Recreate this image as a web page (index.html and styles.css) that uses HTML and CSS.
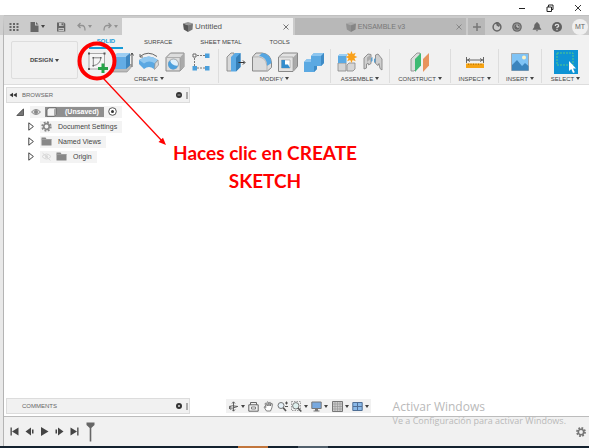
FILE: index.html
```html
<!DOCTYPE html>
<html lang="es">
<head>
<meta charset="utf-8">
<title>Untitled</title>
<link rel="stylesheet" href="styles.css">
</head>
<body>
<header class="titlebar">
  <button class="win-btn" aria-label="Minimize"><svg width="8" height="8" viewBox="0 0 8 8"><path d="M1 4.500h6" stroke="#222"/></svg></button>
  <button class="win-btn" aria-label="Restore"><svg width="8" height="8" viewBox="0 0 8 8"><path d="M1 3h4.500v4.500H1zM2.500 3V1H7v4.500H5.500" fill="none" stroke="#222"/></svg></button>
  <button class="win-btn" aria-label="Close"><svg width="8" height="8" viewBox="0 0 8 8"><path d="M1 1l6 6M7 1l-6 6" stroke="#222" stroke-width=".9"/></svg></button>
</header>

<div class="frame">
<div class="gutter"></div>
<div class="app">
  <nav class="tabbar">
    <div class="quick">
      <button class="q" aria-label="Data panel"><svg width="10" height="10" viewBox="0 0 10 10" fill="#666"><path d="M.5 1h2v2h-2zM4 1h2v2H4zM7.500 1h2v2h-2zM.5 4h2v2h-2zM4 4h2v2H4zM7.500 4h2v2h-2zM.5 7h2v2h-2zM4 7h2v2H4zM7.500 7h2v2h-2z"/></svg></button>
      <button class="q wide" aria-label="File"><svg width="9" height="10" viewBox="0 0 9 10"><path d="M.5 0H5v3.500h3.500V10h-8zM6 0l2.500 2.500H6z" fill="#666"/></svg><i class="caret"></i></button>
      <button class="q" aria-label="Save"><svg width="10" height="10" viewBox="0 0 10 10"><path d="M1 .5h7l1.300 1.300v7.700H1z" fill="#666"/><path d="M3 1h4.500v3H3zM2.500 6h5.500v3H2.500z" fill="#c4c4c4"/><path d="M5.500 1.200H7v2H5.500zM3.200 7h4v.8h-4z" fill="#666"/></svg></button>
      <button class="q wide dim" aria-label="Undo"><svg width="9" height="9" viewBox="0 0 9 9"><path d="M3.500 1L1 3.500 3.500 6M1 3.500h4Q8 3.500 8 8.500" fill="none" stroke="#929292" stroke-width="1.300"/></svg><i class="caret"></i></button>
      <button class="q wide dim" aria-label="Redo"><svg width="9" height="9" viewBox="0 0 9 9"><path d="M5.500 1L8 3.500 5.500 6M8 3.500H4Q1 3.500 1 8.500" fill="none" stroke="#929292" stroke-width="1.300"/></svg><i class="caret"></i></button>
    </div>
    <div class="doc active">
      <button class="doc-name"><svg width="10" height="10" viewBox="0 0 10 10"><path d="M0 1.500L5 0l5 1.500-4.500 1.700z" fill="#999"/><path d="M0 1.500l5 1.700V10L.8 7.500z" fill="#555"/><path d="M5 3.200l5-1.700-.5 6L5 10z" fill="#777"/></svg>Untitled</button>
      <button class="x" aria-label="Close tab"><svg width="6" height="6" viewBox="0 0 6 6"><path d="M.5.5l5 5M5.500.5l-5 5" stroke="#777"/></svg></button>
    </div>
    <div class="doc">
      <button class="doc-name"><svg width="10" height="10" viewBox="0 0 10 10"><path d="M0 1.500L5 0l5 1.500-4.500 1.700z" fill="#aaa"/><path d="M0 1.500l5 1.700V10L.8 7.500z" fill="#929292"/><path d="M5 3.200l5-1.700-.5 6L5 10z" fill="#858585"/></svg>ENSAMBLE v3</button>
      <button class="x" aria-label="Close tab"><svg width="6" height="6" viewBox="0 0 6 6"><path d="M.5.5l5 5M5.500.5l-5 5" stroke="#888"/></svg></button>
    </div>
    <button class="new" aria-label="New tab"><svg width="8" height="8" viewBox="0 0 8 8"><path d="M0 4h8M4 0v8" stroke="#777" stroke-width="1.500"/></svg></button>
    <div class="status">
      <button aria-label="Extensions"><svg width="10" height="10" viewBox="0 0 10 10"><circle cx="5" cy="5" r="3.900" fill="none" stroke="#666" stroke-width="1.500"/><path d="M4 0h2.500v2.500l2-.5L7 5 4.500 3.500z" fill="#666"/></svg></button>
      <button aria-label="Job status"><svg width="10" height="10" viewBox="0 0 10 10"><circle cx="5" cy="5" r="4.800" fill="#666"/><circle cx="5" cy="5" r="3.200" fill="none" stroke="#aaa" stroke-width=".7"/><path d="M5 2.500V5h2.300" fill="none" stroke="#ddd"/></svg></button>
      <button aria-label="Notifications"><svg width="10" height="10" viewBox="0 0 10 10"><path d="M4.400 0h1.200v1C7.500 1.500 7.800 3 7.800 5L9.500 7.800h-9L2.200 5c0-2 .3-3.500 2.200-4zM3.800 8.300h2.400Q5 10.500 3.800 8.300z" fill="#666"/></svg></button>
      <button aria-label="Help"><svg width="10" height="10" viewBox="0 0 10 10"><circle cx="5" cy="5" r="5" fill="#606060"/><path d="M3.300 4Q3.300 2.300 5 2.300T6.700 4Q6.500 4.800 5 5.400v.9M5 7v1.200" fill="none" stroke="#ddd" stroke-width="1.200"/></svg></button>
      <button class="avatar">MT</button>
    </div>
  </nav>

  <section class="toolbar">
    <button class="workspace">DESIGN <i class="caret"></i></button>
    <div class="ribbon">
      <div class="modes">
        <button class="mode on">SOLID</button>
        <button class="mode">SURFACE</button>
        <button class="mode">SHEET METAL</button>
        <button class="mode">TOOLS</button>
      </div>
      <div class="groups">
        <div class="group">
          <div class="icons">
            <button class="tool sketch" aria-label="Create Sketch">
              <svg width="22" height="22" viewBox="0 0 22 22"><path d="M3 2.500h15.500V18H3z" fill="#f6f6f6" stroke="#888" stroke-width=".7"/><path d="M2 1.500h2v2H2zM17.500 1.500h2v2h-2zM2 17h2v2H2zM6.500 6h1.500v1.500H6.500zM14 6h1.500v1.500H14zM6.500 14H8v1.500H6.500z" fill="#555"/><path d="M7.300 14.700V6.800h7.500Q14.300 13.500 7.300 14.700" fill="none" stroke="#666" stroke-width=".8"/><path d="M15.500 12.500h3V16H22v3h-3.500v3h-3v-3H12v-3h3.500z" fill="#27a348"/></svg>
              <svg class="callout" width="100" height="110" viewBox="0 0 100 110"><circle cx="20" cy="22" r="17.500" fill="none" stroke="#f00" stroke-width="4"/><path d="M26 39L86 103" stroke="#f00" stroke-width="1.200"/><path d="M89 106l-7.500-3 4.500-4.300z" fill="#f00"/></svg>
            </button>
            <button class="tool" aria-label="Extrude"><svg width="22" height="22" viewBox="0 0 22 22"><path d="M1 17h14l4-4v3.500L15 21H1z" fill="#bbb" stroke="#888" stroke-width=".6"/><path d="M1 5.500h13V18H1z" fill="#63ace5"/><path d="M1 5.500L5 2h13l-4 3.500z" fill="#9bcdf2"/><path d="M14 5.500L18 2v12.500L14 18z" fill="#3d86c0"/><path d="M20 16V2M18.500 4.500L20 2l1.500 2.500" fill="none" stroke="#444" stroke-width=".9"/></svg></button>
            <button class="tool" aria-label="Revolve"><svg width="22" height="22" viewBox="0 0 22 22"><path d="M1 9q10-7 19 0l-4 9q-5-4-10 0L1 13z" fill="#5ba8e2"/><path d="M1 9q10-7 19 0l-3 3.500Q11 8.500 6 12.500z" fill="#91c8f0"/><path d="M17 12.500L20 9l.5 5-4 4.500z" fill="#ddd" stroke="#888" stroke-width=".7"/><path d="M2 5.500Q10-1 19 5.500M2 3v3h3" fill="none" stroke="#555" stroke-width=".9"/></svg></button>
            <button class="tool" aria-label="Hole"><svg width="22" height="22" viewBox="0 0 22 22"><path d="M2 6.500L6.500 2H20v13.500L16 20H2z" fill="#ddd" stroke="#888"/><path d="M16 6.500L20 2v13.500L16 20z" fill="#aaa"/><path d="M2.500 6.500H16V20" fill="none" stroke="#999" stroke-width=".7"/><circle cx="9.500" cy="13" r="5" fill="#dff0fb" stroke="#888" stroke-width=".7"/><path d="M6 9.500a5 5 0 1 0 8 5q-6 1-8-5z" fill="#4da0dc"/></svg></button>
            <button class="tool" aria-label="Pattern"><svg width="22" height="22" viewBox="0 0 22 22"><path d="M7 4.500h8M4.500 7v8M7 17h8" stroke="#777" stroke-dasharray="2 1"/><path d="M3 3h3v3H3z" fill="#fff" stroke="#666"/><path d="M15 2.500h4.500V7H15zM2.500 15H7v4.500H2.500zM15 15h4.500v4.500H15z" fill="#4a9fdc"/></svg></button>
          </div>
          <button class="menu">CREATE <i class="caret"></i></button>
        </div>
        <div class="group">
          <div class="icons">
            <button class="tool" aria-label="Press Pull"><svg width="22" height="22" viewBox="0 0 22 22"><path d="M2 6l4-4h3v14l-3 4H2z" fill="#d9d9d9" stroke="#888" stroke-width=".9"/><path d="M6 6l4-4h5.500v14L11 20.500H6z" fill="#5aa9e4"/><path d="M11 6.500L15.500 2v14L11 20.500z" fill="#357fb8"/><path d="M13.500 11.500h6M18 9.500l2 2-2 2" fill="none" stroke="#333"/></svg></button>
            <button class="tool" aria-label="Fillet"><svg width="22" height="22" viewBox="0 0 22 22"><path d="M1.500 20V6l3.500-4h6q9 1 9.500 10v4.500L16.500 20z" fill="#ddd" stroke="#888"/><path d="M8 5l3-3q9 1 9.500 10L16 15Q16 6 8 5z" fill="#55a6e2"/><path d="M2 6q13-2 14 9v5" fill="none" stroke="#aaa" stroke-width=".8"/></svg></button>
            <button class="tool" aria-label="Shell"><svg width="22" height="22" viewBox="0 0 22 22"><path d="M1.500 6L6 2h14.500v13.500L16 20.500H1.500z" fill="#e3e3e3" stroke="#888"/><path d="M16 6.500L20 2.500v13l-4 4.500z" fill="#aaa"/><path d="M4.500 9H13v8H4.500z" fill="#fff" stroke="#999" stroke-width=".6"/><path d="M4.500 9v8H13l-2-3.500H8V9z" fill="#348dcd"/><path d="M2 6h14v14" fill="none" stroke="#999" stroke-width=".7"/></svg></button>
            <button class="tool" aria-label="Combine"><svg width="22" height="22" viewBox="0 0 22 22"><path d="M1 11l3-3h4V5l3-3h10v10l-3 3h-4v3l-3 3H1z" fill="#5ba9e2"/><path d="M8 5l3-3h10l-3 3zM1 11l3-3h4v3z" fill="#8cc5ef"/><path d="M18 5l3-3v10l-3 3zM11 15h3v3l-3 3z" fill="#3e8bc6"/></svg></button>
          </div>
          <button class="menu">MODIFY <i class="caret"></i></button>
        </div>
        <div class="group">
          <div class="icons">
            <button class="tool" aria-label="New Component"><svg width="22" height="22" viewBox="0 0 22 22"><path d="M2 12h8v8H2zM11 14l2-2h6v6l-2 2h-6z" fill="#d5d5d5" stroke="#888" stroke-width=".8"/><path d="M2 12h8.500V4.500L12 3H4L2 5z" fill="#5ba9e2"/><path d="M2 5l2-2h8l-2 2z" fill="#9dd0f4"/><path d="M15.500 0l1.200 3 3-1.300-1.300 3 3 1.300-3 1.200 1.300 3-3-1.300-1.200 3-1.300-3-3 1.300 1.300-3-3-1.200 3-1.300-1.300-3 3 1.300z" fill="#f9a11b"/></svg></button>
            <button class="tool" aria-label="Joint"><svg width="22" height="22" viewBox="0 0 22 22"><path d="M2 18V7l4-4 3 .5v9L6.500 14l-.5-2-1.500 1v4zM20 19V8l-4-5-2.500 1v8.500l2.500 2 1-2 1 5z" fill="#cfcfcf" stroke="#888" stroke-width=".9"/><path d="M5 6.500L9 3.500v4L5 11z" fill="#aaa"/><path d="M9 7l1.500-1v4L9 11zM13.500 7L12 8v4l1.500-1z" fill="#5b9fcf"/></svg></button>
          </div>
          <button class="menu">ASSEMBLE <i class="caret"></i></button>
        </div>
        <div class="group">
          <div class="icons">
            <button class="tool" aria-label="Offset Plane"><svg width="22" height="22" viewBox="0 0 22 22"><path d="M2 8l6-6h3v12l-6 6H2z" fill="#ddd" stroke="#888" stroke-width=".8"/><path d="M6 8l6-6v12.500L6 21z" fill="#3fba73"/><path d="M14 8l6-6v12.500L14 21z" fill="#e8935d"/></svg></button>
          </div>
          <button class="menu">CONSTRUCT <i class="caret"></i></button>
        </div>
        <div class="group">
          <div class="icons">
            <button class="tool" aria-label="Measure"><svg width="22" height="22" viewBox="0 0 22 22"><path d="M2.500 6v6M19.500 6v6M3 9h16M6 7.500L3.500 9 6 10.500M16 7.500L18.500 9 16 10.500" fill="none" stroke="#555" stroke-width=".9"/><path d="M2 12.500h18V17H2z" fill="#f7a414"/><path d="M4.500 12.500V14m2.500-1.500V14m2.500-1.500V14m2.500-1.500V14m2.500-1.500V14m2.500-1.500V14" stroke="#a86b00" stroke-width=".7"/></svg></button>
          </div>
          <button class="menu">INSPECT <i class="caret"></i></button>
        </div>
        <div class="group">
          <div class="icons">
            <button class="tool" aria-label="Insert Image"><svg width="22" height="22" viewBox="0 0 22 22"><path d="M2.500 2.500h17v17h-17z" fill="#7fc3f5" stroke="#999" stroke-width=".8"/><circle cx="15" cy="6.500" r="2" fill="#fff3c4"/><path d="M3 14l5-5 5 6 3-3 3.500 3v4.500H3z" fill="#3a84bd"/></svg></button>
          </div>
          <button class="menu">INSERT <i class="caret"></i></button>
        </div>
        <div class="group">
          <div class="icons">
            <button class="tool" aria-label="Select"><svg width="24" height="24" viewBox="0 0 24 24"><path d="M0 0h24v24H0z" fill="#0e93d4"/><path d="M3 3h16v12H3z" fill="none" stroke="#5fd07f" stroke-width=".9" stroke-dasharray="2 1"/><path d="M15 11v10l2.300-2 1.700 4 1.800-.8-1.800-3.800h3z" fill="#fff"/></svg></button>
          </div>
          <button class="menu">SELECT <i class="caret"></i></button>
        </div>
      </div>
    </div>
  </section>

  <main class="canvas">
    <aside class="browser">
      <div class="panel-head"><svg class="lead" width="8" height="6" viewBox="0 0 8 6"><path d="M4 .8v4.400L.5 3zM7.800.8v4.400L4.200 3z" fill="#333"/></svg><span>BROWSER</span><button class="dot" aria-label="Minimize panel"><svg width="6" height="6" viewBox="0 0 6 6"><circle cx="3" cy="3" r="3" fill="#333"/><path d="M1.500 3h3" stroke="#aaa"/></svg></button><i class="grip"></i></div>
      <ul class="tree">
        <li class="row root">
          <svg width="8" height="8" viewBox="0 0 8 8"><path d="M7.500.8v6.700H.8z" fill="#777" stroke="#333" stroke-width=".7"/></svg>
          <div class="chip">
            <svg width="10" height="8" viewBox="0 0 10 8"><path d="M.5 4Q5-1 9.500 4 5 9 .5 4z" fill="#ddd" stroke="#888"/><circle cx="5" cy="4" r="2" fill="#888"/></svg>
            <span class="selected"><svg width="11" height="10" viewBox="0 0 11 10"><path d="M1 2.500L3 .8h7v6.700L8 9.300H1z" fill="#f4f4f4" stroke="#555" stroke-width=".8"/><path d="M8 2.500l2-1.500v6.500L8 9z" fill="#aaa"/></svg>(Unsaved)</span>
            <svg width="9" height="9" viewBox="0 0 9 9"><circle cx="4.500" cy="4.500" r="3.800" fill="#fff" stroke="#444" stroke-width=".9"/><circle cx="4.500" cy="4.500" r="1.500" fill="#333"/></svg>
          </div>
        </li>
        <li class="row">
          <svg width="6" height="9" viewBox="0 0 6 9"><path d="M.8.8v7.400L5.400 4.500z" fill="#fff" stroke="#444"/></svg>
          <div class="chip"><svg width="11" height="11" viewBox="0 0 11 11"><circle cx="5.500" cy="5.500" r="4.300" fill="none" stroke="#888" stroke-width="1.800" stroke-dasharray="1.900 1.480"/><circle cx="5.500" cy="5.500" r="2.800" fill="none" stroke="#888" stroke-width="1.800"/></svg><span>Document Settings</span></div>
        </li>
        <li class="row">
          <svg width="6" height="9" viewBox="0 0 6 9"><path d="M.8.8v7.400L5.400 4.500z" fill="#fff" stroke="#444"/></svg>
          <div class="chip"><svg width="11" height="9" viewBox="0 0 11 9"><path d="M.5.5h4l1 1.500h5v6.500H.5z" fill="#888"/><path d="M.5 2.500h10" stroke="#aaa" stroke-width=".6"/></svg><span>Named Views</span></div>
        </li>
        <li class="row">
          <svg width="6" height="9" viewBox="0 0 6 9"><path d="M.8.8v7.400L5.400 4.500z" fill="#fff" stroke="#444"/></svg>
          <div class="chip"><svg width="11" height="9" viewBox="0 0 11 9"><path d="M1 4.500q4.500-5 9 0-4.500 5-9 0zM1.500 1l8 7.500" fill="none" stroke="#d8d8d8"/><circle cx="5.500" cy="4.500" r="1.500" fill="#d8d8d8"/></svg><svg width="11" height="9" viewBox="0 0 11 9"><path d="M.5.5h4l1 1.500h5v6.500H.5z" fill="#888"/><path d="M.5 2.500h10" stroke="#aaa" stroke-width=".6"/></svg><span>Origin</span></div>
        </li>
      </ul>
    </aside>

    <p class="note">Haces clic en CREATE<br>SKETCH</p>

    <div class="bottom">
      <div class="panel-head comments"><span>COMMENTS</span><button class="dot" aria-label="Add comment"><svg width="6" height="6" viewBox="0 0 6 6"><circle cx="3" cy="3" r="3" fill="#333"/><path d="M2 3h2M3 2v2" stroke="#ddd"/></svg></button><i class="grip"></i></div>
      <div class="navbar">
        <button class="nav" aria-label="Orbit"><svg width="11" height="11" viewBox="0 0 11 11"><path d="M5.500 1v9M4 2.500L5.500.8 7 2.500M4 8.500l1.500 1.700L7 8.500M1 7q3 1 8.500-1.500M1 5.500Q4 4 10 5.500M3 5.500L1 7l2 1.500" fill="none" stroke="#555" stroke-width=".9"/></svg><i class="caret"></i></button>
        <button class="nav" aria-label="Look At"><svg width="11" height="11" viewBox="0 0 11 11"><path d="M.8 3.800h9.400v6.400H.8zM2.500 3.800V1.500M8.500 3.800V1.500M2.500 1.500h6" fill="none" stroke="#666"/><path d="M3.500 6h4v2h-4z" fill="#fff" stroke="#666" stroke-width=".8"/></svg></button>
        <button class="nav" aria-label="Pan"><svg width="11" height="11" viewBox="0 0 11 11"><path d="M3.500 10L1 6q0-1.200 2 .5L2 2.500q.8-1 1.600.5l.7 2L4 1.200q1-1 1.500.3L6 5l.3-3.500q1-.8 1.400.3L7.500 5l.8-2.500q1-.5 1.200.7L8.800 7 7.500 10z" fill="#fff" stroke="#666" stroke-width=".8"/></svg></button>
        <button class="nav" aria-label="Zoom"><svg width="11" height="11" viewBox="0 0 11 11"><circle cx="4" cy="4.500" r="3" fill="#e4f0f8" stroke="#777"/><path d="M6.200 6.700L9 10" stroke="#555" stroke-width="1.700"/><path d="M8 2h3M9.500.5v3M8 5.500h3" stroke="#444" stroke-width=".9"/></svg></button>
        <button class="nav" aria-label="Fit"><svg width="11" height="11" viewBox="0 0 11 11"><path d="M.5.5h9v9h-9z" fill="none" stroke="#888" stroke-width=".8" stroke-dasharray="1.500 1"/><circle cx="4.800" cy="4.800" r="3.200" fill="#dff0ee" stroke="#777"/><path d="M7 7l3.300 3.500" stroke="#555" stroke-width="1.600"/></svg><i class="caret"></i></button>
        <button class="nav" aria-label="Display"><svg width="11" height="11" viewBox="0 0 11 11"><path d="M.8 1h9.400v6.500H.8z" fill="#78a9df" stroke="#777"/><path d="M4 8h3v1.500h1.500v1h-6v-1H4z" fill="#777"/></svg><i class="caret"></i></button>
        <button class="nav" aria-label="Grid"><svg width="11" height="11" viewBox="0 0 11 11"><path d="M.5.5h10v10H.5z" fill="#ccc" stroke="#777"/><path d="M3 1v9M5.500 1v9M8 1v9M1 3h9M1 5.500h9M1 8h9" stroke="#999" stroke-width=".7"/></svg><i class="caret"></i></button>
        <button class="nav" aria-label="Viewports"><svg width="11" height="11" viewBox="0 0 11 11"><path d="M.8 1.500h9.400v8H.8z" fill="#8ab9e8" stroke="#4f6f96"/><path d="M5.500 1.500v8M1 5.500h9" stroke="#4f6f96"/></svg><i class="caret"></i></button>
      </div>
    </div>
  </main>

  <footer class="timeline">
    <button class="play" aria-label="Go to start"><svg width="9" height="9" viewBox="0 0 9 9"><path d="M.5.5h1.300v8H.5zM8.500.5v8L2 4.500z" fill="#444"/></svg></button>
    <button class="play" aria-label="Step back"><svg width="9" height="9" viewBox="0 0 9 9"><path d="M6 .5v8L.5 4.500zM7 2.500h1.500v4H7z" fill="#444"/></svg></button>
    <button class="play" aria-label="Play"><svg width="9" height="9" viewBox="0 0 9 9"><path d="M1 0v9l7.500-4.500z" fill="#444"/></svg></button>
    <button class="play" aria-label="Step forward"><svg width="9" height="9" viewBox="0 0 9 9"><path d="M3 .5v8l5.500-4zM.5 2.500H2v4H.5z" fill="#444"/></svg></button>
    <button class="play" aria-label="Go to end"><svg width="9" height="9" viewBox="0 0 9 9"><path d="M7.200.5h1.300v8H7.200zM.5.5v8L7 4.500z" fill="#444"/></svg></button>
    <svg class="marker" width="9" height="20" viewBox="0 0 9 20"><path d="M.5.5h8V3L5.300 6v13.500H3.700V6L.5 3z" fill="#666"/></svg>
    <button class="gear" aria-label="Timeline settings"><svg width="10" height="10" viewBox="0 0 11 11"><circle cx="5.500" cy="5.500" r="4.400" fill="none" stroke="#777" stroke-width="2" stroke-dasharray="1.900 1.555"/><circle cx="5.500" cy="5.500" r="3" fill="none" stroke="#777" stroke-width="1.800"/></svg></button>
  </footer>
</div>
</div>
<div class="taskbar"><i class="task hot"></i><i class="task"></i></div>
<div class="watermark"><div class="wm-title">Activar Windows</div><div class="wm-text">Ve a Configuración para activar Windows.</div></div>
</body>
</html>
```
FILE: styles.css
```css
* { box-sizing: border-box; }

body {
  margin: 0;
  min-height: 100vh;
  display: flex;
  flex-direction: column;
  position: relative;
  overflow: hidden;
  background: #fff;
  color: #444;
  font: 6px/8px "Liberation Sans", Arial, sans-serif;
}

button {
  display: flex;
  align-items: center;
  justify-content: center;
  margin: 0;
  padding: 0;
  border: 0;
  background: none;
  color: inherit;
  font: inherit;
  white-space: nowrap;
}

svg { display: block; flex: none; }

.caret {
  flex: none;
  margin-left: 2px;
  border: 2px solid transparent;
  border-top: 3px solid #444;
  border-bottom: 0;
}

/* Window title bar */
.titlebar {
  display: flex;
  justify-content: flex-end;
  height: 15px;
  gap: 20px;
  padding-right: 7px;
}

.frame { flex: 1; display: flex; }

.gutter {
  width: 4px;
  border-top: 20px solid #cfcfcf;
  border-right: 1px solid #b4b4b4;
  background: #e9e9e9;
}

.app { flex: 1; min-width: 0; display: flex; flex-direction: column; }

/* Document tabs */
.tabbar {
  display: flex;
  height: 20px;
  padding-top: 2px;
  border-top: 1px solid #c0c0c0;
  background: #cbcbcb;
}

.quick {
  flex: none;
  display: flex;
  align-items: center;
  justify-content: space-between;
  width: 118px;
  padding: 0 4px 0 5px;
}

.dim .caret { border-top-color: #929292; }

.doc {
  flex: 1;
  display: flex;
  margin-right: 2px;
  padding-right: 4px;
  background: #b8b8b8;
  color: #777;
  font-size: 7px;
}

.doc.active { background: #f1f1f1; color: #555; font-size: 8px; }
.doc-name { flex: 1; gap: 2px; }
.new { width: 17px; background: #b8b8b8; }

.status {
  display: flex;
  align-items: center;
  gap: 10px;
  padding: 0 1px 0 7px;
}

.avatar {
  width: 16px;
  height: 16px;
  border-radius: 50%;
  background: #efefef;
  color: #666;
  font-size: 7px;
}

/* Ribbon */
.toolbar {
  display: flex;
  height: 50px;
  border-bottom: 1px solid #ddd;
  background: #f1f1f1;
}

.workspace {
  flex: none;
  width: 67px;
  height: 38px;
  margin: 6px 2px 0 7px;
  border: 1px solid #ddd;
  border-radius: 2px;
  font-weight: bold;
}

.ribbon { flex: 1; min-width: 0; }
.modes { display: flex; height: 14px; padding-left: 9px; gap: 21px; }
.mode.on {
  width: 34px;
  border-bottom: 2px solid #159bd7;
  color: #159bd7;
  font-weight: bold;
}
.mode:nth-child(3) { margin: 0 7px; }

.groups {
  display: grid;
  grid-template-columns: 139fr 112fr 59fr 61fr 48fr 43fr 47fr;
}

.group { height: 34px; border-right: 1px solid #ddd; }
.group:last-child { border-right: 0; }
.icons { display: flex; justify-content: center; gap: 4px; height: 25px; }
.tool { position: relative; width: 22px; }
.menu { width: 100%; height: 9px; }

.callout { position: absolute; top: -10px; left: -9px; z-index: 2; pointer-events: none; }

/* Canvas */
.canvas {
  flex: 1;
  display: flex;
  flex-direction: column;
  justify-content: space-between;
  position: relative;
  padding: 2px;
}

.panel-head {
  display: flex;
  align-items: center;
  width: 184px;
  height: 16px;
  padding-left: 15px;
  border: 1px solid #dcdcdc;
  background: #f1f1f1;
  color: #666;
}

.lead { margin: 0 5px 0 -13px; }
.dot { margin-left: auto; }
.grip { width: 2px; height: 7px; margin: 0 1px 0 4px; border: 1px solid #aaa; border-width: 0 1px; }

.tree {
  margin: 0;
  padding: 1px 0 0 22px;
  list-style: none;
  font-size: 7px;
}

.row { display: flex; align-items: center; gap: 6px; height: 15px; }
.root { margin-left: -12px; }
.chip {
  display: flex;
  align-items: center;
  gap: 4px;
  height: 12px;
  padding: 0 5px 0 1px;
  background: #f3f3f3;
}
.chip span { padding-left: 2px; }
.chip .selected {
  display: flex;
  align-items: center;
  gap: 8px;
  height: 10px;
  padding: 0 5px 0 1px;
  background: #8f8f8f;
  color: #fff;
  font-weight: bold;
}

.note {
  position: absolute;
  top: 54px;
  left: 169px;
  margin: 0;
  color: #f00;
  font: bold 19px/28px Lato, sans-serif;
  text-align: center;
  white-space: nowrap;
}

.bottom { display: flex; align-items: center; gap: 36px; }

.navbar {
  display: flex;
  align-items: center;
  justify-content: space-between;
  width: 145px;
  height: 14px;
  padding: 0 2px;
  background: #f1f1f1;
}

/* Timeline */
.timeline {
  display: flex;
  align-items: center;
  gap: 6px;
  height: 30px;
  padding: 0 3px 0 6px;
  border-top: 1px solid #bcbcbc;
  background: #f1f1f1;
}
.marker { margin-left: 1px; }
.gear { margin-left: auto; }

.taskbar { display: flex; gap: 30px; height: 2px; padding-left: 238px; background: #14222f; }
.task { width: 30px; background: #52606c; }
.task.hot { background: #c2763c; }

/* Operating system notice floating over the window */
.watermark {
  position: absolute;
  right: 23px;
  bottom: 21px;
  color: #b9b9b9;
  font-family: "Open Sans", "Noto Sans", sans-serif;
  pointer-events: none;
}
.wm-title { font-size: 12px; line-height: 15px; }
.wm-text { font-size: 9px; line-height: 13px; }
```
